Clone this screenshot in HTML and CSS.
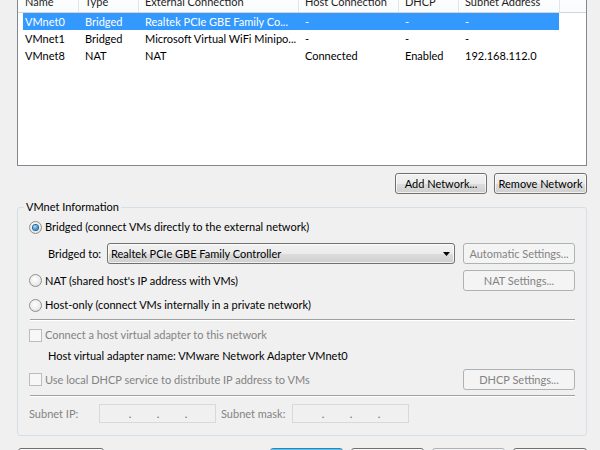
FILE: index.html
```html
<!DOCTYPE html>
<html>
<head>
<meta charset="utf-8">
<link rel="stylesheet" href="styles.css">
</head>
<body>
<div class="dialog">
  <div class="list">
    <div class="lv-header">
      <div class="col first">Name</div>
      <div class="col">Type</div>
      <div class="col">External Connection</div>
      <div class="col">Host Connection</div>
      <div class="col">DHCP</div>
      <div class="col">Subnet Address</div>
      <div class="col filler"></div>
    </div>
    <div class="lv-row selected">
      <div class="cell">VMnet0</div>
      <div class="cell">Bridged</div>
      <div class="cell">Realtek PCIe GBE Family Co...</div>
      <div class="cell">-</div>
      <div class="cell">-</div>
      <div class="cell">-</div>
    </div>
    <div class="lv-row">
      <div class="cell">VMnet1</div>
      <div class="cell">Bridged</div>
      <div class="cell">Microsoft Virtual WiFi Minipo...</div>
      <div class="cell">-</div>
      <div class="cell">-</div>
      <div class="cell">-</div>
    </div>
    <div class="lv-row">
      <div class="cell">VMnet8</div>
      <div class="cell">NAT</div>
      <div class="cell">NAT</div>
      <div class="cell">Connected</div>
      <div class="cell">Enabled</div>
      <div class="cell">192.168.112.0</div>
    </div>
  </div>

  <div class="list-actions">
    <button class="btn w-add">Add Network...</button>
    <button class="btn w-remove">Remove Network</button>
  </div>

  <fieldset class="group">
    <legend>VMnet Information</legend>

    <div class="g-row r1">
      <span class="radio checked"></span><span>Bridged (connect VMs directly to the external network)</span>
    </div>

    <div class="g-row r2">
      <span class="bridged-label">Bridged to:</span>
      <div class="combo">
        <span>Realtek PCIe GBE Family Controller</span>
        <svg class="arrow" width="7" height="4" viewBox="0 0 7 4"><path d="M0 0H7L3.5 4Z" fill="#000"/></svg>
      </div>
      <button class="btn side disabled">Automatic Settings...</button>
    </div>

    <div class="g-row r3">
      <span class="radio"></span><span>NAT (shared host's IP address with VMs)</span>
      <button class="btn side disabled push">NAT Settings...</button>
    </div>

    <div class="g-row r4">
      <span class="radio"></span><span>Host-only (connect VMs internally in a private network)</span>
    </div>

    <div class="sep"></div>

    <div class="g-row r5">
      <span class="check"></span><span class="dim">Connect a host virtual adapter to this network</span>
    </div>

    <div class="g-row r6">
      <span class="indent">Host virtual adapter name: VMware Network Adapter VMnet0</span>
    </div>

    <div class="g-row r7">
      <span class="check"></span><span class="dim">Use local DHCP service to distribute IP address to VMs</span>
      <button class="btn side disabled push">DHCP Settings...</button>
    </div>

    <div class="sep sep2"></div>

    <div class="g-row r8">
      <span class="dim ip-label">Subnet IP:</span>
      <div class="ip"><span class="dot">.</span><span class="dot">.</span><span class="dot">.</span></div>
      <span class="dim mask-label">Subnet mask:</span>
      <div class="ip"><span class="dot">.</span><span class="dot">.</span><span class="dot">.</span></div>
    </div>
  </fieldset>

  <div class="footer">
    <button class="btn w-restore">Restore Defaults</button>
    <button class="btn w-std default push">OK</button>
    <button class="btn w-std">Cancel</button>
    <button class="btn w-std disabled">Apply</button>
    <button class="btn w-help">Help</button>
  </div>
</div>
</body>
</html>
```
FILE: styles.css
```css
* { box-sizing: border-box; }
html, body { margin: 0; padding: 0; }
body {
  width: 600px;
  height: 450px;
  overflow: hidden;
  background: #f0f0f0;
  font-family: Lato, "Liberation Sans", Arial, sans-serif;
  font-size: 11px;
  line-height: 14px;
  color: #000;
}
.dialog {
  padding: 0 13px 0 17px;
  margin-top: -12px;
}

/* list view */
.list {
  height: 178px;
  border: 1px solid #828790;
  background: #fff;
}
.lv-header {
  display: grid;
  grid-template-columns: 61px 60px 160px 100px 60px 101px 1fr;
  height: 24px;
  border-bottom: 1px solid #d5d5d5;
  background: linear-gradient(#ffffff, #fafbfc);
}
.lv-header .col {
  border-right: 1px solid #e3e5e8;
  padding: 6px 0 0 6px;
  white-space: nowrap;
  overflow: hidden;
  color: #1e1e1e;
}
.lv-header .col.first { padding-left: 7px; }
.lv-header .col.filler { border-right: 0; }

.lv-row {
  display: grid;
  grid-template-columns: 56px 60px 160px 100px 60px 100px;
  width: 536px;
  height: 17px;
  margin-left: 5px;
  align-items: center;
}
.lv-row .cell {
  padding-left: 6px;
  white-space: nowrap;
  overflow: hidden;
}
.lv-row .cell:first-child { padding-left: 2px; }
.lv-row.selected { background: #3399ff; color: #fff; }

/* buttons */
.btn {
  height: 21px;
  padding: 0;
  border: 1px solid #707070;
  border-radius: 3px;
  background: linear-gradient(#f2f2f2 0%, #ebebeb 50%, #dddddd 51%, #cfcfcf 100%);
  box-shadow: inset 0 0 0 1px rgba(255,255,255,0.7);
  font: inherit;
  color: #000;
  text-align: center;
  white-space: nowrap;
  flex: none;
}
.btn.disabled {
  border-color: #adb2b5;
  background: #f4f4f4;
  box-shadow: none;
  color: #838383;
}
.btn.default {
  border-color: #3c7fb1;
  box-shadow: inset 0 0 0 1px #48c8f5;
}
.push { margin-left: auto; }

.list-actions {
  display: flex;
  justify-content: flex-end;
  gap: 7px;
  margin-top: 7px;
}
.w-add { width: 92px; }
.w-remove { width: 93px; }

/* group box */
.group {
  margin: 6px 0 0;
  padding: 0 11px 12px;
  border: 1px solid #d5dfe5;
  border-radius: 3px;
  min-width: 0;
}
.group legend {
  margin-left: -5px;
  padding: 0 2px;
  line-height: 14px;
}
.g-row {
  display: flex;
  align-items: center;
  white-space: nowrap;
}
.r1 { height: 18px; margin-top: 4px; }
.r2 { height: 21px; margin-top: 7px; }
.r3 { height: 21px; margin-top: 6px; }
.r4 { height: 18px; margin-top: 5px; }
.r5 { height: 16px; margin-top: 6px; }
.r6 { height: 16px; margin-top: 5px; }
.r7 { height: 21px; margin-top: 5px; }
.r8 { height: 19px; margin-top: 7px; }

.sep {
  height: 2px;
  margin: 5px 0 0 1px;
  border-top: 1px solid #a0a0a0;
  border-bottom: 1px solid #ffffff;
}

.radio {
  position: relative;
  flex: none;
  width: 13px;
  height: 13px;
  margin-right: 3px;
  border-radius: 50%;
  border: 1px solid #8e8f8f;
  background: radial-gradient(circle at 45% 40%, #ffffff 0%, #ececec 55%, #cdcdcd 100%);
}
.radio.checked::after {
  content: "";
  position: absolute;
  left: 3px;
  top: 3px;
  width: 5px;
  height: 5px;
  border-radius: 50%;
  background: radial-gradient(circle at 40% 35%, #b5e3fb 0%, #3d93d8 55%, #1b5a98 100%);
  box-shadow: 0 0 0 1px #2c628b;
}
.check {
  flex: none;
  width: 13px;
  height: 13px;
  margin-right: 3px;
  border: 1px solid #bcbcbc;
  background: #f7f7f7;
}
.dim { color: #838383; }

.bridged-label { width: 59px; margin-left: 19px; flex: none; }
.combo {
  display: flex;
  align-items: center;
  width: 348px;
  height: 21px;
  margin-right: 8px;
  padding-left: 3px;
  border: 1px solid #707070;
  border-radius: 3px;
  background: linear-gradient(#f2f2f2 0%, #ebebeb 50%, #dddddd 51%, #cfcfcf 100%);
  box-shadow: inset 0 0 0 1px rgba(255,255,255,0.7);
  flex: none;
}
.combo .arrow { margin-left: auto; margin-right: 4px; }
.btn.side { width: 112px; }

.indent { margin-left: 19px; }

.ip-label { width: 70px; flex: none; }
.mask-label { width: 71px; margin-left: 5px; flex: none; }
.ip {
  display: flex;
  gap: 24px;
  width: 117px;
  height: 19px;
  padding-left: 28px;
  border: 1px solid #d9d9d9;
  background: #f0f0f0;
  flex: none;
}
.ip .dot {
  width: 4px;
  text-align: center;
  color: #6d6d6d;
  line-height: 17px;
}

.footer {
  display: flex;
  gap: 8px;
  margin-top: 12px;
  padding-left: 1px;
}
.footer .btn { height: 23px; }
.w-restore { width: 86px; }
.w-std { width: 73px; }
.w-help { width: 74px; }
```
